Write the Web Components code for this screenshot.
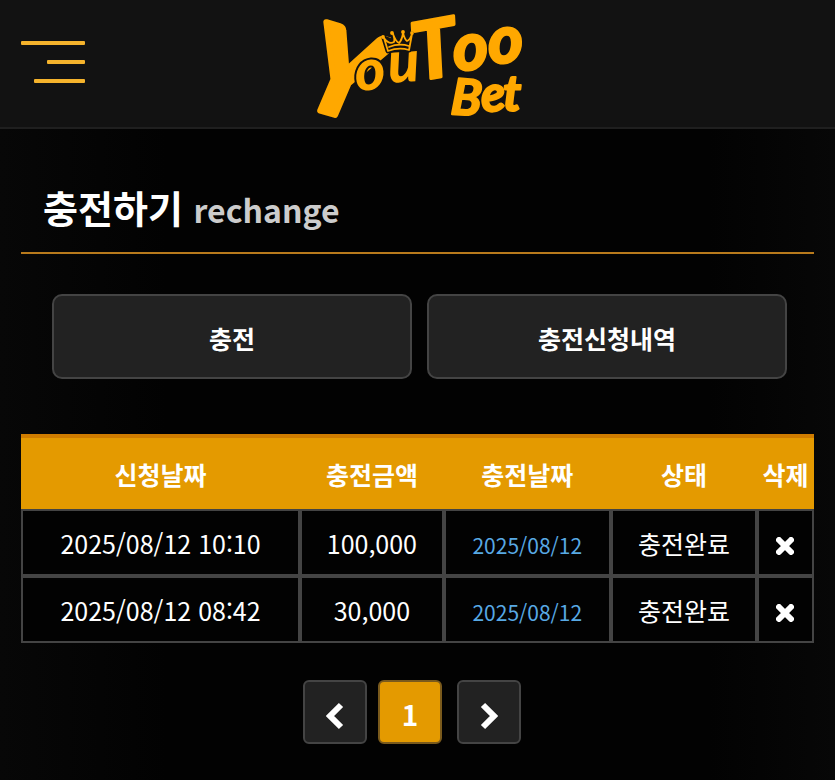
<!DOCTYPE html>
<html lang="ko">
<head>
<meta charset="UTF-8">
<meta name="viewport" content="width=device-width, initial-scale=1.0">
<title>YouToo Bet</title>
<style>
  body {
    margin: 0;
    min-height: 100vh;
    background: linear-gradient(90deg, #070707, #020202 20%, #020202 85%, #070707);
    color: #fff;
    font-family: "Noto Sans CJK KR", sans-serif;
    --accent: #e49a00;
    --accent-dark: #cf7c00;
    --panel: #222;
    --line: #444;
  }
  main {
    padding: 0 21px 36px;
  }
</style>
</head>
<body>
<site-header></site-header>
<main>
  <page-title sub="rechange">충전하기</page-title>
  <tab-bar>
    <tab-button>충전</tab-button>
    <tab-button>충전신청내역</tab-button>
  </tab-bar>
  <history-table></history-table>
  <page-nav></page-nav>
</main>

<script>
class SiteLogo extends HTMLElement {
  connectedCallback() {
    this.attachShadow({ mode: 'open' });
    this.shadowRoot.innerHTML = `
      <style>
        :host {
          display: block;
        }
        a {
          display: block;
        }
        svg {
          display: block;
          overflow: visible;
        }
        text {
          fill: #ffa800;
          stroke: #ffa800;
          stroke-width: 2;
          stroke-linejoin: round;
          font-family: Lato, sans-serif;
          font-weight: 700;
          font-style: italic;
        }
        /* dark edge keeps the small letters apart from the Y */
        .inner {
          stroke: #121212;
          stroke-width: 4;
          paint-order: stroke;
          font-weight: 900;
        }
      </style>
      <a href="#" aria-label="YouToo Bet">
        <svg width="240" height="127" viewBox="0 0 240 127">
          <text><tspan x="-1" y="104" rotate="16" font-size="120" stroke-width="6">Y</tspan><tspan class="inner" x="58 91" y="91 83" rotate="-4" font-size="58">ou</tspan><tspan x="119" y="81" rotate="-10" font-size="80" stroke-width="3">T</tspan><tspan x="156 191" y="70 63" rotate="-2" font-size="66" stroke-width="3">oo</tspan></text>
          <text font-size="50"><tspan x="152 184 205" y="114 112 111" rotate="4 -4 0">Bet</tspan></text>
          <g fill="#121212" stroke="#121212" stroke-width="5" stroke-linejoin="round">
            <path d="M90 51 L86 38 L96 42 L95 34 L101 43 L105 33 L109 41 L114 34 L111 50 Q101 47 90 51 Z"/>
          </g>
          <g fill="none" stroke="#ffa800" stroke-width="1.8" stroke-linejoin="round" stroke-linecap="round">
            <path d="M90 51 L86 38 Q91 45 96 42 Q97 39 95 34 Q98 42 101 43 Q104 40 105 33 Q107 40 109 41 Q112 40 114 34 L111 50 Q101 47 90 51 Z"/>
            <path d="M91 47 Q101 43 111 46"/>
            <circle cx="85" cy="37" r="1"/><circle cx="94" cy="33" r="1"/><circle cx="105" cy="32" r="1"/><circle cx="114" cy="33" r="1"/>
          </g>
        </svg>
      </a>
    `;
  }
}
customElements.define('site-logo', SiteLogo);

class SiteHeader extends HTMLElement {
  connectedCallback() {
    this.attachShadow({ mode: 'open' });
    this.shadowRoot.innerHTML = `
      <style>
        :host {
          display: grid;
          grid-template-columns: 1fr auto 1fr;
          align-items: center;
          padding: 0 21px;
          background: #121212;
          border-bottom: 2px solid #1f1f1f;
        }
        .menu {
          display: flex;
          flex-direction: column;
          align-items: flex-end;
          gap: 15px;
          width: 64px;
          padding: 0 0 3px;
          border: 0;
          background: none;
          cursor: pointer;
        }
        .menu span {
          width: 64px;
          height: 4px;
          border-radius: 1px;
          background: #f5b32c;
        }
        .menu span:nth-child(2) {
          width: 38px;
        }
        .menu span:nth-child(3) {
          width: 51px;
        }
      </style>
      <button class="menu" type="button" aria-label="메뉴">
        <span></span><span></span><span></span>
      </button>
      <site-logo></site-logo>
    `;
  }
}
customElements.define('site-header', SiteHeader);

class PageTitle extends HTMLElement {
  connectedCallback() {
    this.attachShadow({ mode: 'open' });
    this.shadowRoot.innerHTML = `
      <style>
        :host {
          display: block;
          padding: 49px 22px 16px;
          border-bottom: 2px solid #b87a1c;
        }
        h1 {
          margin: 0;
          font-size: 38px;
          font-weight: 700;
          line-height: 58px;
        }
        small {
          color: #ccc;
          font-size: 32px;
          line-height: 36px;
        }
      </style>
      <h1><slot></slot> <small>${this.getAttribute('sub')}</small></h1>
    `;
  }
}
customElements.define('page-title', PageTitle);

class TabBar extends HTMLElement {
  connectedCallback() {
    this.attachShadow({ mode: 'open' });
    this.shadowRoot.innerHTML = `
      <style>
        :host {
          display: grid;
          grid-template-columns: 1fr 1fr;
          gap: 15px;
          padding: 40px 27px 55px 31px;
        }
      </style>
      <slot></slot>
    `;
  }
}
customElements.define('tab-bar', TabBar);

class TabButton extends HTMLElement {
  connectedCallback() {
    this.attachShadow({ mode: 'open' });
    this.shadowRoot.innerHTML = `
      <style>
        :host {
          display: block;
        }
        button {
          display: block;
          width: 100%;
          padding: 24px 16px 21px;
          border: 2px solid var(--line);
          border-radius: 10px;
          background: var(--panel);
          color: #fff;
          font-family: inherit;
          font-size: 25px;
          font-weight: 700;
          line-height: 36px;
          cursor: pointer;
        }
      </style>
      <button type="button"><slot></slot></button>
    `;
  }
}
customElements.define('tab-button', TabButton);

const rows = [
  { requested: '2025/08/12 10:10', amount: '100,000', charged: '2025/08/12', status: '충전완료' },
  { requested: '2025/08/12 08:42', amount: '30,000', charged: '2025/08/12', status: '충전완료' }
];

class HistoryTable extends HTMLElement {
  connectedCallback() {
    this.attachShadow({ mode: 'open' });
    this.shadowRoot.innerHTML = `
      <style>
        :host {
          display: block;
        }
        table {
          width: 100%;
          table-layout: fixed;
          border-collapse: separate;
          border-spacing: 0;
          font-size: 25px;
          line-height: 36px;
          text-align: center;
          white-space: nowrap;
        }
        .requested { width: 35.2%; }
        .amount { width: 18.1%; }
        .charged { width: 21.1%; }
        .status { width: 18.4%; }
        .delete { width: 7.2%; }
        th {
          padding: 18px 0 17px;
          border-top: 4px solid var(--accent-dark);
          background: var(--accent);
          font-weight: 700;
        }
        td {
          padding: 14px 0 13px;
          border: 2px solid var(--line);
          background: #020202;
        }
        .date {
          color: #58a9e4;
          font-size: 21px;
          line-height: 30px;
        }
        button {
          display: block;
          margin: 0 auto;
          padding: 5px 0 0;
          border: 0;
          background: none;
          cursor: pointer;
        }
        svg {
          display: block;
        }
      </style>
      <table>
        <colgroup>
          <col class="requested"><col class="amount"><col class="charged"><col class="status"><col class="delete">
        </colgroup>
        <thead>
          <tr><th>신청날짜</th><th>충전금액</th><th>충전날짜</th><th>상태</th><th>삭제</th></tr>
        </thead>
        <tbody>
          ${rows.map(row => `
          <tr>
            <td>${row.requested}</td>
            <td>${row.amount}</td>
            <td><span class="date">${row.charged}</span></td>
            <td>${row.status}</td>
            <td>
              <button type="button" aria-label="삭제">
                <svg width="18" height="18" viewBox="0 0 18 18"><path d="M3 3 L15 15 M15 3 L3 15" fill="none" stroke="#fff" stroke-width="6" stroke-linecap="round"/></svg>
              </button>
            </td>
          </tr>`).join('')}
        </tbody>
      </table>
    `;
  }
}
customElements.define('history-table', HistoryTable);

class PageNav extends HTMLElement {
  connectedCallback() {
    this.attachShadow({ mode: 'open' });
    this.shadowRoot.innerHTML = `
      <style>
        :host {
          display: block;
          padding: 37px 11px 0 0;
        }
        nav {
          display: flex;
          justify-content: center;
          gap: 11px;
        }
        a {
          display: flex;
          box-sizing: border-box;
          align-items: center;
          justify-content: center;
          width: 64px;
          height: 64px;
          padding-top: 8px;
          border: 2px solid var(--line);
          border-radius: 6px;
          background: var(--panel);
          color: #fff;
          font-size: 28px;
          font-weight: 700;
          line-height: 36px;
          text-decoration: none;
        }
        .current {
          margin-right: 4px;
          padding-top: 4px;
          border-color: #7a5a1c;
          background: var(--accent);
        }
      </style>
      <nav aria-label="페이지">
        <a href="#" aria-label="이전"><svg width="18" height="28" viewBox="0 0 18 28"><path d="M15 3 L4 14 L15 25" fill="none" stroke="#fff" stroke-width="6"/></svg></a>
        <a class="current" href="#" aria-current="page">1</a>
        <a href="#" aria-label="다음"><svg width="18" height="28" viewBox="0 0 18 28"><path d="M3 3 L14 14 L3 25" fill="none" stroke="#fff" stroke-width="6"/></svg></a>
      </nav>
    `;
  }
}
customElements.define('page-nav', PageNav);
</script>
</body>
</html>
